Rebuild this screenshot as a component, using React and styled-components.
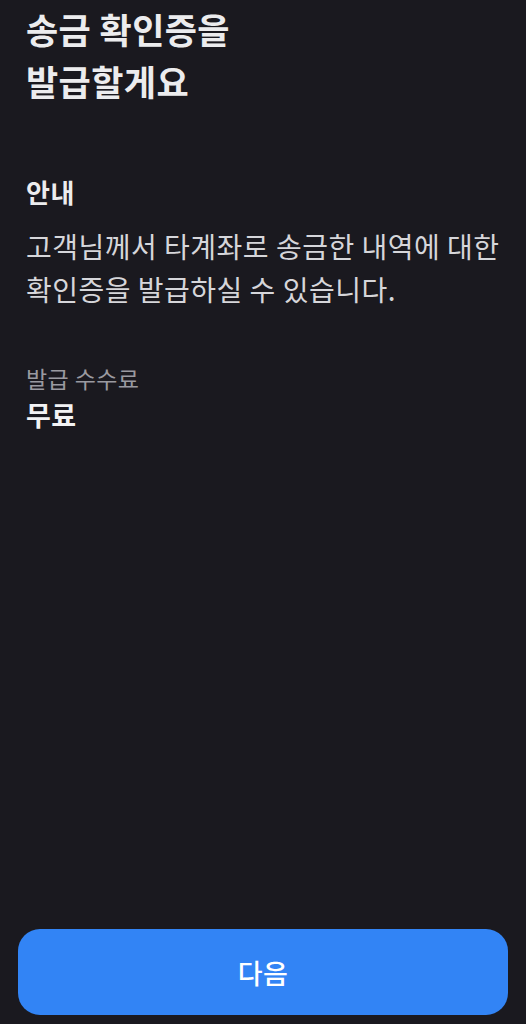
import React from 'react';
import styled, { createGlobalStyle } from 'styled-components';

const GlobalStyle = createGlobalStyle`
  html, body {
    margin: 0;
    padding: 0;
    background: #1a191f;
  }
  body {
    font-family: "Noto Sans CJK KR", "Noto Sans", sans-serif;
    -webkit-font-smoothing: antialiased;
  }
`;

const Page = styled.div`
  display: flex;
  flex-direction: column;
  min-height: 100vh;
  box-sizing: border-box;
  padding: 3px 18px 9px;
  background: #1a191f;
`;

const Content = styled.div`
  padding: 0 8px;
  flex: 1;
  word-break: keep-all;
`;

const Title = styled.h1`
  margin: 0;
  font-size: 35px;
  font-weight: 700;
  line-height: 52px;
  color: #ececee;
  letter-spacing: 0.4px;
`;

const Section = styled.section`
  margin-top: ${(p) => p.gap}px;
`;

const Heading = styled.h2`
  margin: 0;
  font-size: 26px;
  font-weight: 700;
  line-height: 34px;
  color: #ececee;
  letter-spacing: 0.5px;
`;

const Body = styled.p`
  margin: 16px 0 0;
  font-size: 28px;
  font-weight: 400;
  line-height: 43px;
  color: #d6d6da;
  letter-spacing: 0.5px;
`;

const Label = styled.div`
  font-size: 23px;
  line-height: 28px;
  color: #9a9aa0;
  letter-spacing: 0.4px;
`;

const Value = styled.div`
  margin-top: 7px;
  font-size: 27px;
  font-weight: 700;
  line-height: 32px;
  color: #f2f2f4;
  letter-spacing: 0.3px;
`;

const NextButton = styled.button`
  margin-top: auto;
  width: 100%;
  height: 86px;
  border: none;
  border-radius: 22px;
  background: #3284f5;
  color: #ffffff;
  font-family: inherit;
  font-size: 27px;
  font-weight: 500;
  letter-spacing: 0.5px;
  cursor: pointer;
`;

export default function App() {
  return (
    <>
      <GlobalStyle />
      <Page>
        <Content>
          <Title>
            송금 확인증을
            <br />
            발급할게요
          </Title>
          <Section gap={68}>
            <Heading>안내</Heading>
            <Body>고객님께서 타계좌로 송금한 내역에 대한 확인증을 발급하실 수 있습니다.</Body>
          </Section>
          <Section gap={53}>
            <Label>발급 수수료</Label>
            <Value>무료</Value>
          </Section>
        </Content>
        <NextButton>다음</NextButton>
      </Page>
    </>
  );
}
